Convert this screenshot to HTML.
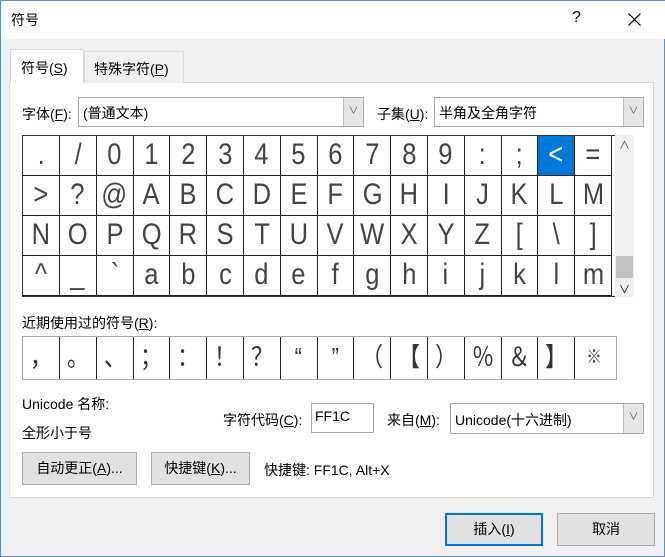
<!DOCTYPE html>
<html><head><meta charset="utf-8"><style>
*{margin:0;padding:0;box-sizing:border-box}
body{width:665px;height:557px;background:#f0f0f0;font-family:"Liberation Sans","Noto Sans CJK SC",sans-serif;font-size:14px;color:#000;position:relative;overflow:hidden;border:1px solid #5a8fc8}
.a{position:absolute}
.t{white-space:nowrap}
.grid{position:absolute;left:21px;top:134px;width:593px;height:162px;background:#fff;border:1px solid #333;border-right:none}
.cell{position:absolute;width:37px;height:40px;border-right:1px solid #222;border-bottom:1px solid #222;text-align:center;font-size:30px;line-height:38px;color:#444;font-weight:normal}
.cell span{display:inline-block;transform:scaleX(0.85)}
.rec{position:absolute;left:21px;top:335px;width:595px;height:44px;background:#fff;border:1px solid #aaa}
.rc{position:absolute;top:0;width:37px;height:42px;border-right:1px solid #222;text-align:center;font-size:26px;line-height:40px;color:#333}
.rc span{display:inline-block;transform:scaleX(0.85)}
.dd{position:absolute;background:#fff;border:1px solid #aaa}
.dd .ar{position:absolute;right:0;top:0;bottom:0;width:20px;background:#e6e6e6;border-left:1px solid #bbb;font-size:10px;color:#555;text-align:center;line-height:28px}
.btn{position:absolute;background:#e1e1e1;border:1px solid #adadad;text-align:center;font-size:14px}
u{text-decoration:underline}
</style></head><body>
<div class="a" style="left:0;top:0;width:665px;height:38px;background:#fff"></div>
<div class="a t" style="left:10px;top:9px;font-size:14px">符号</div>
<div class="a t" style="left:571px;top:8px;font-size:16px">?</div>
<svg class="a" style="left:627px;top:12px" width="13" height="13"><path d="M0.5 0.5L12.5 12.5M12.5 0.5L0.5 12.5" stroke="#000" stroke-width="1.2"/></svg>
<div class="a" style="left:8px;top:81px;width:645px;height:416px;background:#fff;border:1px solid #d9d9d9"></div>
<div class="a" style="left:83px;top:50px;width:100px;height:32px;background:#f0f0f0;border:1px solid #d9d9d9;border-bottom:none"></div>
<div class="a" style="left:9px;top:48px;width:74px;height:34px;background:#fff;border:1px solid #d9d9d9;border-bottom:none"></div>
<div class="a t" style="left:20px;top:57px">符号(<u>S</u>)</div>
<div class="a t" style="left:93px;top:58px">特殊字符(<u>P</u>)</div>
<div class="a t" style="left:21px;top:103px">字体(<u>F</u>):</div>
<div class="dd" style="left:77px;top:96px;width:286px;height:30px"><span class="a t" style="left:4px;top:5px">(普通文本)</span><div class="ar">∨</div></div>
<div class="a t" style="left:376px;top:103px">子集(<u>U</u>):</div>
<div class="dd" style="left:433px;top:96px;width:210px;height:30px"><span class="a t" style="left:4px;top:5px">半角及全角字符</span><div class="ar">∨</div></div>
<div class="grid" id="g"></div>
<div class="a" style="left:614px;top:134px;width:19px;height:162px;background:#f0f0f0"></div>
<div class="a" style="left:615px;top:255px;width:17px;height:22px;background:#c1c1c1"></div>
<div class="a" style="left:618px;top:136px;font-size:11px;color:#555">∧</div>
<div class="a" style="left:618px;top:280px;font-size:11px;color:#000">∨</div>
<div class="a t" style="left:21px;top:312px">近期使用过的符号(<u>R</u>):</div>
<div class="rec" id="r"></div>
<div class="a t" style="left:21px;top:393px">Unicode 名称:</div>
<div class="a t" style="left:21px;top:422px">全形小于号</div>
<div class="a t" style="left:222px;top:409px">字符代码(<u>C</u>):</div>
<div class="a" style="left:310px;top:402px;width:63px;height:30px;background:#fff;border:1px solid #aaa"><span class="a" style="left:3px;top:4px">FF1C</span></div>
<div class="a t" style="left:386px;top:409px">来自(<u>M</u>):</div>
<div class="dd" style="left:449px;top:402px;width:194px;height:31px"><span class="a t" style="left:4px;top:6px">Unicode(十六进制)</span><div class="ar">∨</div></div>
<div class="btn" style="left:21px;top:451px;width:115px;height:33px;line-height:31px">自动更正(<u>A</u>)...</div>
<div class="btn" style="left:150px;top:451px;width:99px;height:33px;line-height:31px">快捷键(<u>K</u>)...</div>
<div class="a t" style="left:263px;top:459px">快捷键: FF1C, Alt+X</div>
<div class="btn" style="left:444px;top:512px;width:98px;height:33px;line-height:29px;border:2px solid #0078d7">插入(<u>I</u>)</div>
<div class="btn" style="left:556px;top:512px;width:98px;height:33px;line-height:31px">取消</div>
<script>
var rows=[[".","/","0","1","2","3","4","5","6","7","8","9",":",";","&lt;","="],["&gt;","?","@","A","B","C","D","E","F","G","H","I","J","K","L","M"],["N","O","P","Q","R","S","T","U","V","W","X","Y","Z","[","\\","]"],["^","_","`","a","b","c","d","e","f","g","h","i","j","k","l","m"]];
var g=document.getElementById('g'),h='';
rows.forEach(function(c,i){c.forEach(function(ch,j){var sel=(i==0&&j==14);var x=j*36.8,y=i*40;h+='<div class="cell" style="left:'+x+'px;top:'+y+'px;'+(sel?'background:#0078d7;color:#fff;':'')+'"><span>'+ch+'</span></div>';});});
g.innerHTML=h;
var rc=["，","。","、","；","：","！","？","“","”","（","【","）","％","＆","】","※"],s='';
rc.forEach(function(ch,j){s+='<div class="rc" style="left:'+(j*36.8)+'px;'+(j==15?'border-right:none;font-size:18px;':'')+'"><span>'+ch+'</span></div>';});
document.getElementById('r').innerHTML=s;
</script>
</body></html>
